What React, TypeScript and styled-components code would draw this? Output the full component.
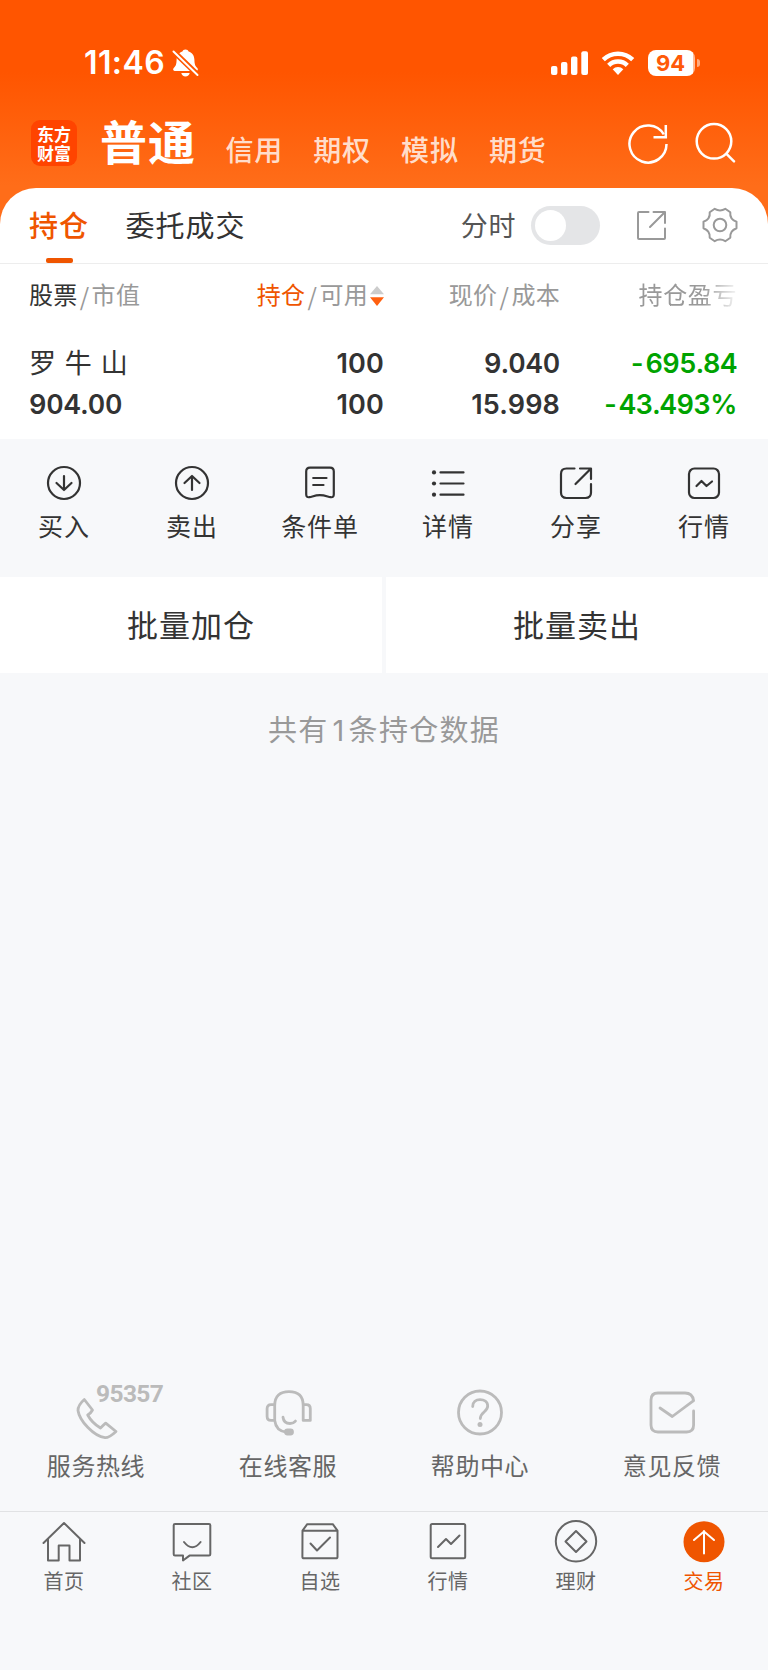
import React from "react";
import styled, { createGlobalStyle } from "styled-components";

const GlobalStyle = createGlobalStyle`
  * { box-sizing: border-box; }
  body {
    margin: 0;
    background: #f7f8fa;
    font-family: Inter, "Noto Sans CJK SC", sans-serif;
    color: #333;
  }
`;

const Screen = styled.div`
  width: 768px;
  height: 1670px;
  display: flex;
  flex-direction: column;
  background: #f7f8fa;
  overflow: hidden;
`;

const Hero = styled.header`
  height: 224px;
  margin-bottom: -36.5px;
  flex: none;
  background: linear-gradient(#ff5500 0, #ff5500 72px, #ff6d19 186px);
  color: #fff;
`;

const StatusBar = styled.div`
  height: 104px;
  padding: 21px 68px 0 84px;
  display: flex;
  align-items: center;
`;

const Clock = styled.span`
  font-size: 32px;
  font-weight: 600;
  line-height: 40px;
  width: 87.5px;
  letter-spacing: 0.4px;
`;

const StatusIcons = styled.div`
  margin-left: auto;
  display: flex;
  align-items: center;
`;

const Battery = styled.div`
  width: 47px;
  height: 26px;
  margin-left: 13px;
  padding-right: 2px;
  border-radius: 8px;
  background: linear-gradient(90deg, #fff 45px, #ffbb99 45px);
  color: #ff5a08;
  font-size: 22px;
  font-weight: 700;
  line-height: 26px;
  text-align: center;
`;

const BatteryNub = styled.i`
  width: 3px;
  height: 8px;
  margin-left: 2px;
  border-radius: 0 4px 4px 0;
  background: #ffaa80;
`;

const AccountBar = styled.div`
  height: 83px;
  padding: 0 31px 0 31px;
  display: flex;
  align-items: flex-start;
`;

const Logo = styled.div`
  width: 46px;
  height: 46px;
  margin-top: 16px;
  padding-top: 4px;
  border-radius: 9px;
  background: #ff4400;
  font-family: "Noto Sans CJK SC", sans-serif;
  font-size: 17px;
  font-weight: 700;
  line-height: 19px;
  text-align: center;
`;

const AccountCurrent = styled.h1`
  margin: 9px 0 0 23px;
  font-size: 47px;
  line-height: 60px;
  font-weight: 700;
  letter-spacing: 1px;
  width: 125.5px;
`;

const AccountLink = styled.span`
  margin-top: 27px;
  width: 87.8px;
  font-size: 28px;
  line-height: 40px;
  letter-spacing: 0.8px;
  font-weight: 500;
  color: rgba(255, 255, 255, 0.8);
`;

const HeroTools = styled.div`
  margin: 16px 0 0 auto;
  display: flex;
  gap: 23px;
`;

const Panel = styled.section`
  height: 251.5px;
  flex: none;
  border-radius: 36px 36px 0 0;
  background: #fff;
`;

const TabRow = styled.div`
  height: 76px;
  padding: 0 30px 0 29px;
  display: flex;
  align-items: center;
  border-bottom: 1px solid #ededed;
`;

const Tab = styled.div<{ $active?: boolean }>`
  height: 75px;
  margin-right: 36.5px;
  display: flex;
  flex-direction: column;
  align-items: center;
  font-size: 29px;
  line-height: 40px;
  padding-top: 19px;
  letter-spacing: 1px;
  font-weight: ${(p) => (p.$active ? 500 : 400)};
  color: ${(p) => (p.$active ? "#ef5500" : "#333")};
  &::after {
    content: "";
    width: 27px;
    height: 5px;
    margin-top: 11px;
    border-radius: 2px;
    background: ${(p) => (p.$active ? "#ef5500" : "transparent")};
  }
`;

const SwitchLabel = styled.span`
  margin-left: auto;
  font-size: 27px;
  line-height: 40px;
  padding-top: 3px;
  letter-spacing: 0.6px;
  color: #555;
`;

const Switch = styled.div`
  width: 69px;
  height: 39px;
  margin: 0 36px 0 15px;
  padding: 4px;
  border-radius: 20px;
  background: #e4e5e7;
  &::before {
    content: "";
    display: block;
    width: 31px;
    height: 31px;
    border-radius: 50%;
    background: #fff;
  }
`;

const TableRow = styled.div`
  padding: 0 31px 0 29px;
  display: grid;
  grid-template-columns: 171px 184px 176px 1fr;
`;

const HeadRow = styled(TableRow)`
  height: 64px;
  align-items: start;
  padding-top: 16px;
  font-size: 24px;
  line-height: 32px;
  letter-spacing: 0.3px;
  color: #999;
`;

const HeadCell = styled.div<{ $end?: boolean; $fade?: boolean }>`
  display: flex;
  align-items: center;
  justify-content: ${(p) => (p.$end ? "flex-end" : "flex-start")};
  white-space: nowrap;
  ${(p) =>
    p.$fade &&
    "letter-spacing: 0.6px; mask-image: linear-gradient(90deg, #000 calc(100% - 34px), rgba(0,0,0,0.1));"}
`;

const HeadWord = styled.span<{ $color?: string }>`
  color: ${(p) => p.$color ?? "#999"};
`;

const Slash = styled.span`
  width: 14px;
  text-align: center;
  font-family: "Noto Sans CJK SC", sans-serif;
`;

const HoldingRow = styled(TableRow)`
  padding-top: 15px;
  font-size: 27px;
  font-weight: 600;
  line-height: 41.5px;
`;

const Cell = styled.div<{ $end?: boolean; $loss?: boolean }>`
  display: flex;
  flex-direction: column;
  white-space: nowrap;
  font-variant-numeric: tabular-nums;
  letter-spacing: ${(p) => (p.$loss ? "-0.5px" : "-0.2px")};
  align-items: ${(p) => (p.$end ? "flex-end" : "flex-start")};
  color: ${(p) => (p.$loss ? "#00a300" : "#333")};
`;

const Figure = styled.span<{ $proportional?: boolean }>`
  ${(p) =>
    p.$proportional &&
    "font-variant-numeric: proportional-nums; letter-spacing: 0.15px;"}
`;

const StockName = styled.span`
  height: 41.5px;
  font-weight: 400;
  word-spacing: 2px;
`;

const Actions = styled.nav`
  height: 138px;
  flex: none;
  padding-top: 26px;
  display: grid;
  grid-template-columns: repeat(6, 1fr);
`;

const Action = styled.div`
  display: flex;
  flex-direction: column;
  align-items: center;
  font-size: 25px;
  line-height: 36px;
  letter-spacing: 0.9px;
  svg { margin-bottom: 8px; }
`;

const BatchRow = styled.div`
  height: 96px;
  flex: none;
  display: grid;
  grid-template-columns: 1fr 1fr;
  gap: 4px;
`;

const BatchButton = styled.button`
  border: 0;
  padding: 0 0 4px;
  background: #fff;
  font: inherit;
  font-size: 31px;
  letter-spacing: 1px;
  color: #333;
`;

const Summary = styled.p`
  margin: 38px 0 0;
  font-size: 29px;
  line-height: 40px;
  letter-spacing: 1.3px;
  text-align: center;
  color: #999;
`;

const Count = styled.span`
  margin: 0 3px 0 4px;
`;

const Services = styled.div`
  height: 130.5px;
  flex: none;
  margin-top: auto;
  display: grid;
  grid-template-columns: repeat(4, 1fr);
`;

const Service = styled.div`
  display: flex;
  flex-direction: column;
  align-items: center;
  font-size: 24px;
  line-height: 36px;
  letter-spacing: 0.6px;
  color: #666;
  svg { margin-bottom: 12px; overflow: visible; }
`;

const HotlineArt = styled.div`
  position: relative;
  display: flex;
`;

const HotlineNumber = styled.span`
  position: absolute;
  left: 24px;
  top: -5px;
  font-family: Roboto, sans-serif;
  font-size: 24.5px;
  font-weight: 700;
  letter-spacing: -0.6px;
  color: #bbb;
`;

const TabBar = styled.nav`
  height: 159px;
  flex: none;
  padding-top: 8px;
  border-top: 1px solid #e1e2e4;
  display: grid;
  grid-template-columns: repeat(6, 1fr);
`;

const TabItem = styled.div<{ $active?: boolean }>`
  display: flex;
  flex-direction: column;
  align-items: center;
  font-size: 20px;
  line-height: 30px;
  letter-spacing: 0.6px;
  color: ${(p) => (p.$active ? "#ef5500" : "#666")};
  svg { margin-bottom: 1px; }
`;

const Svg = styled.svg<{ $w?: number }>`
  display: block;
  flex: none;
  fill: none;
  stroke: currentColor;
  stroke-width: ${(p) => p.$w ?? 2};
  stroke-linecap: round;
  stroke-linejoin: round;
`;

const Muted = styled(Svg)`
  color: #bbb;
`;

const ExportIcon = styled(Svg)`
  margin-right: 35px;
  color: #999;
`;

const GearIcon = styled(Svg)`
  color: #999;
`;

const WifiIcon = styled.svg`
  margin-left: 12px;
`;

const SortIcon = styled.svg`
  margin-left: 2px;
`;

const BellOff = () => (
  <svg width="27" height="28" viewBox="0 0 27 28">
    <path fill="#fff" d="M13.5 0.5c1.8 0 2.6.8 3.1 2.1 3.7 1 5.6 4.2 5.8 8.1.1 4.6.8 6.3 2.9 8.4 1 1 .7 2.9-.9 2.9H2.6c-1.6 0-1.9-1.9-.9-2.9 2.1-2.1 2.8-3.8 2.9-8.4.2-3.9 2.1-7.1 5.8-8.1.5-1.3 1.3-2.1 3.1-2.1zM9.3 24h8.4c-.5 2.2-2 3.5-4.2 3.5S9.8 26.200 9.3 24z" />
    <path stroke="#ff5700" strokeWidth="5.5" d="M-.5.5 27 27" />
    <path stroke="#fff" strokeWidth="2" strokeLinecap="round" d="M1.5 2.5 25.5 26" />
  </svg>
);

const Signal = () => (
  <svg width="38" height="24" viewBox="0 0 38 24" fill="#fff">
    <rect x="0" y="15" width="6.4" height="9" rx="2" />
    <rect x="10" y="11" width="6.4" height="13" rx="2" />
    <rect x="20" y="5.5" width="6.4" height="18.5" rx="2" />
    <rect x="30.3" y="0.3" width="6.7" height="23.7" rx="2" />
  </svg>
);

const Wifi = () => (
  <WifiIcon width="34" height="24" viewBox="0 0 34 24" fill="none" stroke="#fff" strokeWidth="4.5">
    <path d="M2.3 8.7a21 21 0 0 1 29.4 0" />
    <path d="M7.7 14.3a13.3 13.3 0 0 1 18.6 0" />
    <path fill="#fff" stroke="none" d="M11.7 18.2a7.5 7.5 0 0 1 10.6 0L17 24z" />
  </WifiIcon>
);

const actions = [
  {
    label: "买入",
    art: <><circle cx="18" cy="18" r="16" /><path d="M18 11v14M10.5 18l7.5 7 7.5-7" /></>,
  },
  {
    label: "卖出",
    art: <><circle cx="18" cy="18" r="16" /><path d="M18 25V11M10.5 18l7.5-7 7.5 7" /></>,
  },
  {
    label: "条件单",
    art: <><path d="M8 2.7h20q3.8 0 3.8 3.8v22.8q0 3.4-3.2 2.9c-3-.5-5.6-2-10.700-2s-7.500 1.500-10.500 2q-3.200.5-3.200-2.900V6.500q0-3.800 3.800-3.800z" /><path d="M11.200 13h13.300M11.200 20h10.300" /></>,
  },
  {
    label: "详情",
    art: <><path d="M10.5 7.4h23M10.5 18.5h23M10.5 29.7h23" /><g fill="currentColor" stroke="none"><circle cx="4" cy="7.4" r="2.1" /><circle cx="4" cy="18.5" r="2.1" /><circle cx="4" cy="29.7" r="2.1" /></g></>,
  },
  {
    label: "分享",
    art: <path d="M16.5 3.5H8.5q-5.5 0-5.5 5.500v18.500q0 5.500 5.500 5.500h19q5.500 0 5.500-5.500v-8.500M22 3.500h11v10.500M32.500 4 17.500 19" />,
  },
  {
    label: "行情",
    art: <><rect x="3" y="3.5" width="30" height="29.5" rx="5.5" /><path d="M10.5 21l5-5 5 5 5.5-4.500" /></>,
  },
];

const tabs = [
  {
    label: "首页",
    art: <path d="M1.500 22 22 2l20.500 20M6 18.500V39.500H16.700V24.500H27.500V39.500H38V18.500" />,
  },
  {
    label: "社区",
    art: <><path d="M5 3h34q1.300 0 1.300 1.300v29q0 1.300-1.300 1.300H19.500L13 39.500v-5H5q-1.300 0-1.300-1.300v-29Q3.700 3 5 3z" /><path d="M14 21q8.300 10.500 16.600 0" /></>,
  },
  {
    label: "自选",
    art: <><path d="M4.500 9.700 9.200 3.200h25.600l4.700 6.500v26q0 1.600-1.600 1.600H6q-1.600 0-1.600-1.600zM4.500 9.700h35" /><path d="M12.500 22.500l6.500 7 13-13" /></>,
  },
  {
    label: "行情",
    art: <><rect x="4.700" y="3" width="34.500" height="34.300" rx="1.500" /><path d="M12 26l8-8 5 5 8.500-8.500" /></>,
  },
  {
    label: "理财",
    art: <><circle cx="22" cy="20.300" r="20.200" /><path d="M22 10 32.500 20.500 22 31 11.500 20.500z" /></>,
  },
  {
    label: "交易",
    active: true,
    art: <><circle cx="22" cy="20.800" r="20.500" fill="currentColor" stroke="none" /><path stroke="#fff" d="M22 32.500V10M12 19 22 10.500 32 19" /></>,
  },
];

export default function App() {
  return (
    <Screen>
      <GlobalStyle />
      <Hero>
        <StatusBar>
          <Clock>11:46</Clock>
          <BellOff />
          <StatusIcons>
            <Signal />
            <Wifi />
            <Battery>94</Battery>
            <BatteryNub />
          </StatusIcons>
        </StatusBar>
        <AccountBar>
          <Logo>东方<br />财富</Logo>
          <AccountCurrent>普通</AccountCurrent>
          <AccountLink>信用</AccountLink>
          <AccountLink>期权</AccountLink>
          <AccountLink>模拟</AccountLink>
          <AccountLink>期货</AccountLink>
          <HeroTools>
            <Svg width="44" height="44" viewBox="0 0 44 44" $w={2.5}>
              <path strokeLinecap="butt" d="M40.5 24a18.500 18.500 0 1 1-2.700-9.600" />
              <path strokeLinecap="butt" strokeLinejoin="miter" d="M39.800 5v12.200H27.500" />
            </Svg>
            <Svg width="44" height="44" viewBox="0 0 44 44" $w={2.5}>
              <circle cx="21" cy="21.300" r="17.300" />
              <path d="M33.500 33.800l7.500 7.500" />
            </Svg>
          </HeroTools>
        </AccountBar>
      </Hero>

      <Panel>
        <TabRow>
          <Tab $active>持仓</Tab>
          <Tab>委托成交</Tab>
          <SwitchLabel>分时</SwitchLabel>
          <Switch />
          <ExportIcon width="31" height="31" viewBox="0 0 31 31">
            <path d="M12.500 2H3q-1 0-1 1v25q0 1 1 1h25q1 0 1-1V18.500M17.500 2H29v11M29 2 14 17" />
          </ExportIcon>
          <GearIcon width="36" height="36" viewBox="0 0 36 36">
            <circle cx="18" cy="18" r="6.300" />
            <path d="M12.700 1.800Q18 5 23.300 1.800L28.300 5.300Q27.500 12 34.500 14.800V21.200Q27.500 24 28.300 30.700L23.300 34.200Q18 31 12.700 34.200L7.700 30.700Q8.500 24 1.500 21.200V14.800Q8.500 12 7.700 5.300Z" />
          </GearIcon>
        </TabRow>
        <HeadRow>
          <HeadCell>
            <HeadWord $color="#333">股票</HeadWord><Slash>/</Slash><HeadWord>市值</HeadWord>
          </HeadCell>
          <HeadCell $end>
            <HeadWord $color="#ef5500">持仓</HeadWord><Slash>/</Slash><HeadWord>可用</HeadWord>
            <SortIcon width="14" height="20" viewBox="0 0 14 20">
              <path fill="#ccc" d="M7 0l7 8.300H0z" />
              <path fill="#ff6010" d="M0 11.300h14L7 20z" />
            </SortIcon>
          </HeadCell>
          <HeadCell $end>
            <HeadWord>现价</HeadWord><Slash>/</Slash><HeadWord>成本</HeadWord>
          </HeadCell>
          <HeadCell $end $fade><HeadWord>持仓盈亏</HeadWord></HeadCell>
        </HeadRow>
        <HoldingRow>
          <Cell><StockName>罗 牛 山</StockName><Figure>904.00</Figure></Cell>
          <Cell $end><Figure $proportional>100</Figure><Figure $proportional>100</Figure></Cell>
          <Cell $end><Figure>9.040</Figure><Figure $proportional>15.998</Figure></Cell>
          <Cell $end $loss><Figure>-695.84</Figure><Figure>-43.493%</Figure></Cell>
        </HoldingRow>
      </Panel>

      <Actions>
        {actions.map((a) => (
          <Action key={a.label}>
            <Svg width="36" height="36" viewBox="0 0 36 36" $w={2.2}>{a.art}</Svg>
            {a.label}
          </Action>
        ))}
      </Actions>

      <BatchRow>
        <BatchButton>批量加仓</BatchButton>
        <BatchButton>批量卖出</BatchButton>
      </BatchRow>

      <Summary>共有<Count>1</Count>条持仓数据</Summary>

      <Services>
        <Service>
          <HotlineArt>
            <Muted width="48" height="56" viewBox="0 0 48 56" $w={2.8}>
              <path d="M12.300 18.500Q6 24 6 29.500C7.500 40 22 55.500 33 56.700Q37 57 44 50.500L33.700 42.200Q31.500 44 28.500 47Q20 42 15.700 34Q19 32 20.500 29Z" />
            </Muted>
            <HotlineNumber>95357</HotlineNumber>
          </HotlineArt>
          服务热线
        </Service>
        <Service>
          <Muted width="48" height="56" viewBox="0 0 48 56" $w={2.8}>
            <path d="M10.700 39.400V24.500C10.700 15 16 10.700 25 10.700S39.200 15 39.200 24.500V39.400M10.700 39.400Q12 50 22 51M10.700 23.700H7q-3.900 0-3.900 3.900v7.900q0 3.900 3.900 3.900h3.700M39.200 23.700h3.200q3.900 0 3.900 3.900v11.800h-7.100M19 36.200q.8 6.300 7 6.300 3.600 0 5.500-2.500" />
            <rect x="21.500" y="49" width="7" height="4" rx="2" fill="#bbb" />
          </Muted>
          在线客服
        </Service>
        <Service>
          <Muted width="48" height="56" viewBox="0 0 48 56" $w={2.8}>
            <circle cx="24" cy="31.500" r="21.500" />
            <path d="M16.700 25.500C16.700 21 20 18.600 24 18.600S31.700 20.500 31.700 25C31.700 31 24.300 31 24.300 37.500" />
            <circle cx="24" cy="43.400" r="2.500" fill="#bbb" stroke="none" />
          </Muted>
          帮助中心
        </Service>
        <Service>
          <Muted width="48" height="56" viewBox="0 0 48 56" $w={2.8}>
            <path d="M45.600 30V44q0 7-7 7H10q-7 0-7-7V19q0-7 7-7h27Q44.500 12 45.600 19.700L24.300 35.500 12 27" />
          </Muted>
          意见反馈
        </Service>
      </Services>

      <TabBar>
        {tabs.map((t) => (
          <TabItem key={t.label} $active={t.active}>
            <Svg width="46" height="46" viewBox="-1 -1 46 46">{t.art}</Svg>
            {t.label}
          </TabItem>
        ))}
      </TabBar>
    </Screen>
  );
}
